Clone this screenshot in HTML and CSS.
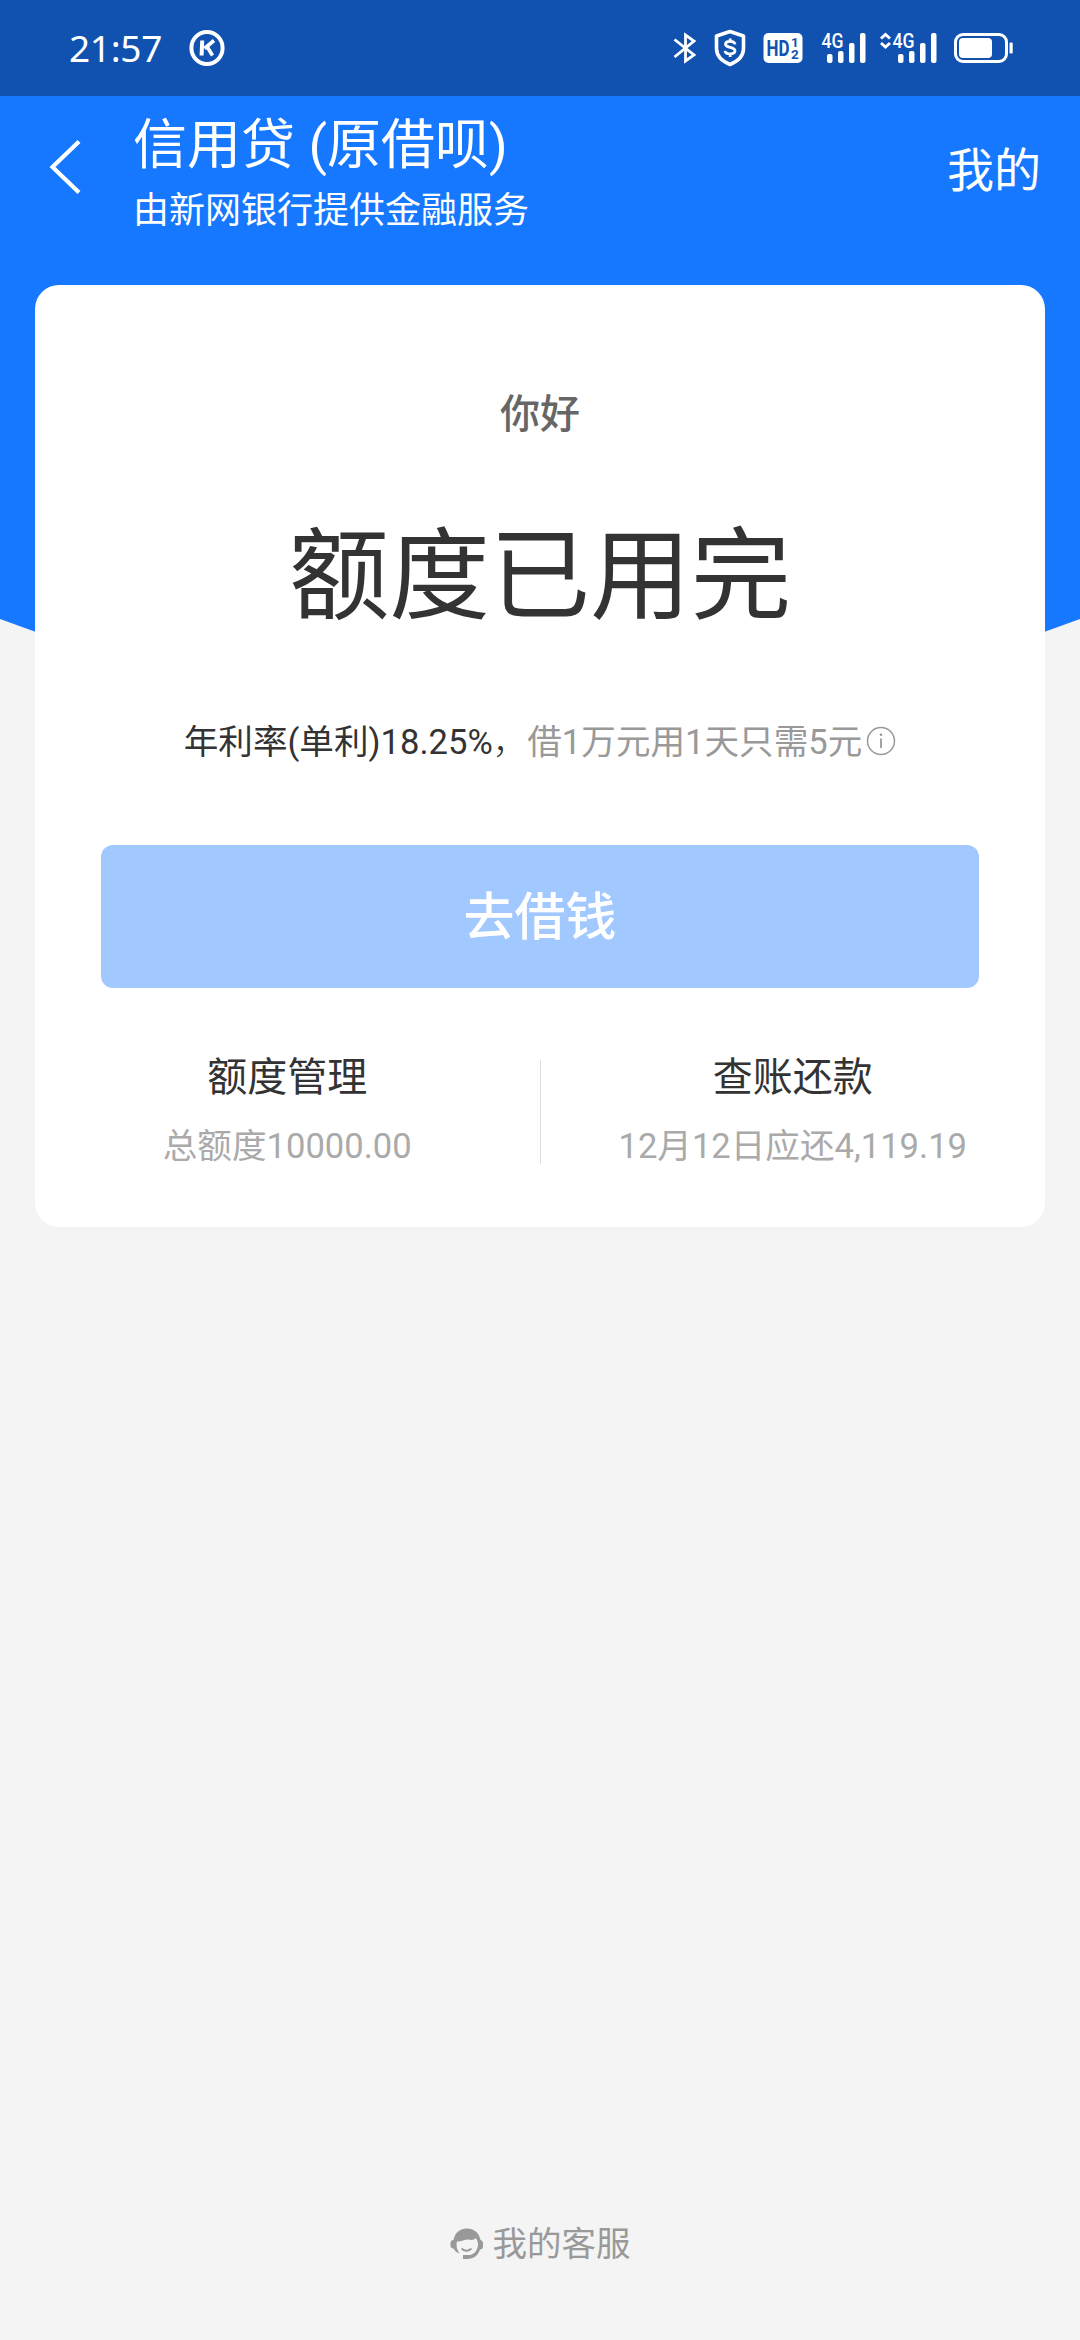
FILE: index.html
```html
<!DOCTYPE html>
<html lang="zh-CN">
<head>
<meta charset="utf-8">
<title>信用贷</title>
<link rel="stylesheet" href="styles.css">
</head>
<body>
<div class="page">
  <div class="status">
    <span class="clock">21:57</span>
    <svg class="k-icon" width="36" height="38" viewBox="0 0 36 38" fill="none" stroke="#fff">
      <ellipse cx="18" cy="19" rx="15.6" ry="16" stroke-width="4"/>
      <path d="M13.200 11.500L12.600 26.500" stroke-width="4"/>
      <path d="M25 11.500L15.500 19.500M18 17.500L23.500 26.500" stroke-width="3.600"/>
    </svg>
    <div class="status-icons">
      <svg class="bt" width="24" height="40" viewBox="0 0 24 40" fill="none" stroke="#fff" stroke-width="2.800">
        <path d="M1.500 11.500L21 27L12.500 33V7L21 13L1.500 29"/>
      </svg>
      <svg class="shield" width="34" height="40" viewBox="0 0 34 40" fill="none" stroke="#fff">
        <path d="M17 3.500L30.500 8V20.500C30.500 28 26 32.800 17 36.500C8 32.800 3.500 28 3.500 20.500V8Z" stroke-width="3.600" stroke-linejoin="round"/>
        <path d="M22 16.300C21.500 12.300 12.500 12.300 12.500 16.300C12.500 20.300 22 18.500 22 22.800C22 26.800 12.500 26.800 12 22.800M17.200 10.500V13.500M17.200 26V29" stroke-width="2.800"/>
      </svg>
      <svg class="hd" width="40" height="40" viewBox="0 0 40 40">
        <rect x="0.500" y="5" width="39" height="30" rx="5" fill="#fff"/>
        <text class="hd-main" x="3.500" y="28" textLength="23" lengthAdjust="spacingAndGlyphs">HD</text>
        <text class="hd-sub" x="28" y="18.500">1</text>
        <text class="hd-sub" x="28" y="30.500">2</text>
      </svg>
      <svg class="sig" width="46" height="40" viewBox="0 0 46 40" fill="#fff">
        <text class="net" x="0.500" y="19.500" textLength="22" lengthAdjust="spacingAndGlyphs">4G</text>
        <rect x="6" y="26" width="5.500" height="9" rx="2"/><rect x="17" y="23" width="5.500" height="12" rx="2"/>
        <rect x="28" y="15" width="5.500" height="20" rx="2"/><rect x="39" y="5" width="5.500" height="30" rx="2"/>
      </svg>
      <svg class="sig2" width="58" height="40" viewBox="0 0 58 40" fill="#fff">
        <path d="M1 10.500L5.500 6.500L10 10.500M1 15L5.500 19L10 15" fill="none" stroke="#fff" stroke-width="3"/>
        <text class="net" x="12.500" y="19.500" textLength="22" lengthAdjust="spacingAndGlyphs">4G</text>
        <rect x="18" y="26" width="5.500" height="9" rx="2"/><rect x="29" y="23" width="5.500" height="12" rx="2"/>
        <rect x="40" y="15" width="5.500" height="20" rx="2"/><rect x="51" y="5" width="5.500" height="30" rx="2"/>
      </svg>
      <svg class="battery" width="60" height="40" viewBox="0 0 60 40">
        <rect x="1.500" y="6.500" width="51" height="27" rx="7.500" fill="none" stroke="#fff" stroke-width="3"/>
        <rect x="5" y="10" width="33" height="20" rx="4" fill="#fff"/>
        <rect x="55.500" y="14.500" width="3.200" height="11" rx="1.200" fill="#fff"/>
      </svg>
    </div>
  </div>

  <div class="hero">
    <header class="nav">
      <svg class="back" width="34" height="56" viewBox="0 0 34 56" fill="none" stroke="#fff" stroke-width="4.200">
        <path d="M31 2.500L4.500 28L31 53.500"/>
      </svg>
      <div class="titles">
        <h1>信用贷 (原借呗)</h1>
        <p>由新网银行提供金融服务</p>
      </div>
      <span class="mine">我的</span>
    </header>

    <main class="card">
      <div class="hello">你好</div>
      <div class="headline">额度已用完</div>
      <div class="rate">
        <span class="rate-main">年利率(单利)18.25%<span class="comma">，</span></span><span>借1万元用1天只需5元</span>
        <svg class="info" width="30" height="30" viewBox="0 0 30 30" fill="none" stroke="#999">
          <circle cx="15" cy="15" r="13.500" stroke-width="1.500"/>
          <path d="M15 12.500V22" stroke-width="1.800"/>
          <circle cx="15" cy="8.800" r="1.300" fill="#999" stroke="none"/>
        </svg>
      </div>
      <div class="borrow">去借钱</div>
      <div class="links">
        <div class="link">
          <strong>额度管理</strong>
          <span>总额度10000.00</span>
        </div>
        <div class="divider"></div>
        <div class="link">
          <strong>查账还款</strong>
          <span>12月12日应还4,119.19</span>
        </div>
      </div>
    </main>
  </div>

  <footer class="service">
    <svg width="34" height="34" viewBox="0 0 34 34">
      <path d="M3.500 13C5 5.500 10 1.500 17 1.500S29 5.500 30.500 13C32 13.500 33 14.500 33 16V19.500C33 21.500 31.800 22.500 30 22.500C28 28.500 24 32 17 32H13V28H20C24.500 27 28 23 28 17C28 14.500 27 12.500 25.500 11C24.500 13 22 13.500 18 12.500C15 12.300 11 15 6.800 14.500C6 19 7 23 9.500 26.500C6.500 25.500 4.500 23.500 3.500 21.500C1.500 21.500 0.500 20.500 0.500 19V16C0.500 14.500 1.500 13 3.500 13Z" fill="#999"/>
      <path d="M11.500 21.500Q16.500 26 21.500 21.500" fill="none" stroke="#999" stroke-width="1.800"/>
    </svg>
    <span>我的客服</span>
  </footer>
</div>
</body>
</html>
```
FILE: styles.css
```css
* { box-sizing: border-box; }

body {
  margin: 0;
  background: #f4f4f4;
  font-family: Roboto, "Noto Sans CJK SC", sans-serif;
}

.page {
  display: flex;
  flex-direction: column;
  width: 1080px;
  height: 2340px;
  overflow: hidden;
}

.status {
  display: flex;
  align-items: center;
  height: 96px;
  padding: 0 66px 0 69px;
  background: #1152b0;
  color: #fff;
}

.clock {
  width: 120px;
  font: 400 37px/94px "Noto Sans", sans-serif;
  letter-spacing: -0.300px;
}

.status-icons {
  display: flex;
  margin-left: auto;
}

.shield { margin-left: 16px; }
.hd { margin-left: 16px; }
.sig { margin-left: 18px; }
.sig2 { margin-left: 13px; }
.battery { margin-left: 16px; }

.hd-main { font: 700 22px Roboto, sans-serif; fill: #1152b0; }
.hd-sub { font: 700 13.500px Roboto, sans-serif; fill: #1152b0; }
.net { font: 500 20px Roboto, sans-serif; }

/* Blue backdrop whose lower edge dips towards the centre */
.hero {
  position: relative;
  padding: 0 35px;
  background: linear-gradient(#1677ff, #1677ff) 0 0 / 100% 523px no-repeat;
}

.hero::before,
.hero::after {
  content: "";
  position: absolute;
  top: 523px;
  width: 36px;
  height: 13px;
  background: #1677ff;
}

.hero::before { left: 0; clip-path: polygon(0 0, 100% 0, 100% 100%); }
.hero::after { right: 0; clip-path: polygon(0 0, 100% 0, 0 100%); }

.nav {
  display: flex;
  height: 189px;
  padding: 0 4px 0 13px;
  color: #fff;
}

.back { margin-top: 43px; }

.titles { margin-left: 51px; }

h1 {
  margin: 14px 0 0;
  font-size: 54px;
  font-weight: 400;
  line-height: 72px;
}

.titles p {
  margin: 5px 0 0;
  font-size: 36px;
  line-height: 48px;
}

.mine {
  margin: 45px 0 0 auto;
  font-size: 47px;
  line-height: 60px;
}

.card {
  position: relative;
  z-index: 1;
  display: flex;
  flex-direction: column;
  align-items: center;
  height: 942px;
  border-radius: 24px;
  background: #fff;
}

.hello {
  margin-top: 100px;
  color: #666;
  font-size: 40px;
  font-weight: 500;
  line-height: 60px;
}

.headline {
  margin-top: 62px;
  color: #333;
  font-size: 100.500px;
  line-height: 140px;
}

.rate {
  display: flex;
  align-items: center;
  height: 50px;
  margin-top: 70px;
  color: #999;
  font-size: 34.600px;
  line-height: 50px;
  white-space: nowrap;
}

.rate-main { color: #333; }

.comma {
  font-family: "Noto Sans CJK SC", sans-serif;
  font-weight: 300;
  line-height: 0;
}

.info { margin: -2px 0 0 4px; }

.borrow {
  width: 878px;
  height: 143px;
  margin-top: 78px;
  border-radius: 12px;
  background: #a1c8ff;
  color: #fff;
  font-size: 51px;
  font-weight: 500;
  line-height: 145px;
  text-align: center;
}

.links {
  display: flex;
  width: 100%;
  margin-top: 60px;
}

.link {
  display: flex;
  flex: 1;
  flex-direction: column;
  align-items: center;
}

.link strong {
  color: #333;
  font-size: 40px;
  font-weight: 400;
  line-height: 60px;
}

.link span {
  margin-top: 13px;
  color: #aaa;
  font-size: 34.600px;
  line-height: 50px;
}

.divider {
  width: 1px;
  height: 104px;
  margin-top: 12px;
  background: #ddd;
}

.service {
  display: flex;
  align-items: center;
  justify-content: center;
  gap: 9px;
  margin-top: auto;
  margin-bottom: 71px;
  color: #999;
  font-size: 34.500px;
  line-height: 50px;
}
```
